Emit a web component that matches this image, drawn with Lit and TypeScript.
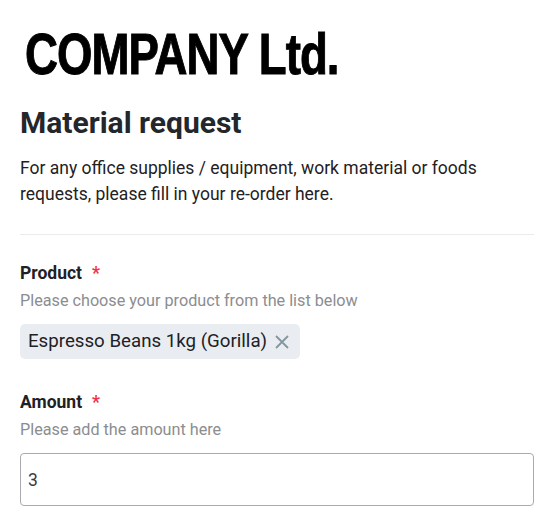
import { LitElement, html, css } from "lit";
import { customElement } from "lit/decorators.js";

@customElement("app-root")
export class AppRoot extends LitElement {
  static styles = css`
    :host { display: block; font-family: Roboto, sans-serif; color: #1f2124; height: 530px; overflow: hidden; }
    .page { padding: 0 21px 0 20px; display: flex; flex-direction: column; }
    .logo { font-family: "Liberation Sans", sans-serif; font-weight: 700; font-size: 57px; line-height: 66px; letter-spacing: -1.2px; color: #000; -webkit-text-stroke: 1px #000; margin: 21px 0 0 5px; transform: scaleX(0.8); transform-origin: left center; white-space: nowrap; }
    h1 { font-size: 30px; line-height: 36px; font-weight: 700; margin: 18px 0 0; color: #23262b; }
    .intro { font-size: 17.5px; line-height: 26px; margin: 14px 0 0; }
    hr { border: 0; border-top: 1px solid #e9ebed; margin: 27px 0 0; width: 100%; }
    .field { display: flex; flex-direction: column; margin-top: 27px; }
    .field + .field { margin-top: 32px; }
    .label { font-size: 17.5px; line-height: 22px; font-weight: 700; display: flex; gap: 10px; }
    .req { color: #f0324b; }
    .hint { font-size: 16.2px; line-height: 20px; color: #8b8d90; margin-top: 7px; }
    .tag { align-self: flex-start; display: flex; align-items: center; gap: 7px; background: #e9edf2; border-radius: 5px; height: 35px; padding: 0 10px 0 8px; font-size: 18.7px; margin-top: 13px; }
    .tag span { padding-bottom: 2px; }
    .tag svg { display: block; }
    .input { border: 1px solid #a9abad; border-radius: 4px; height: 50px; padding: 1px 7px 0; box-sizing: content-box; display: flex; align-items: center; font-size: 17.5px; color: #3a3c3f; margin-top: 13px; }
  `;

  render() {
    return html`<div class="page">
      <div class="logo">COMPANY Ltd.</div>
      <h1>Material request</h1>
      <p class="intro">For any office supplies / equipment, work material or foods requests, please fill in your re-order here.</p>
      <hr />
      <div class="field">
        <div class="label"><span>Product</span><span class="req">*</span></div>
        <div class="hint">Please choose your product from the list below</div>
        <div class="tag"><span>Espresso Beans 1kg (Gorilla)</span>
          <svg width="16" height="16" viewBox="0 0 16 16"><path d="M2 2 L14 14 M14 2 L2 14" stroke="#83969f" stroke-width="1.8" fill="none"/></svg>
        </div>
      </div>
      <div class="field">
        <div class="label"><span>Amount</span><span class="req">*</span></div>
        <div class="hint">Please add the amount here</div>
        <div class="input">3</div>
      </div>
    </div>`;
  }
}
